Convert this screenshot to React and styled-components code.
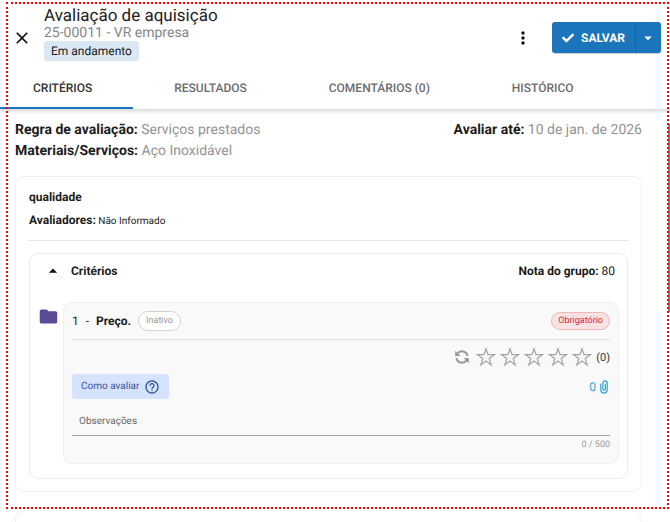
import React, { useState } from 'react';
import styled, { createGlobalStyle } from 'styled-components';
import { MdClose, MdMoreVert, MdFolder, MdHelpOutline, MdArrowDropUp, MdArrowDropDown } from 'react-icons/md';
import { FaCheck } from 'react-icons/fa';

const GlobalStyle = createGlobalStyle`
  *, *::before, *::after { box-sizing: border-box; }
  html, body { margin: 0; height: 100%; overflow: hidden; background: #fff; }
  body { font-family: Roboto, "Liberation Sans", sans-serif; color: #212121; text-rendering: geometricPrecision; }
  #root { height: 100%; }
  button, input { font-family: inherit; text-rendering: inherit; }
  h1, h2, h3, p { margin: 0; }
  svg { display: block; flex: none; }
`;

const Page = styled.div`
  position: relative;
  display: flex;
  flex-direction: column;
  height: 100%;
  overflow: hidden;
`;

const SelectionFrame = styled.div`
  position: absolute;
  inset: 2px 1px 13px 6px;
  border: 2px dotted #f00;
  pointer-events: none;
`;

const ScrollThumb = styled.div`
  position: absolute;
  top: 124px;
  right: 0;
  width: 2px;
  height: 188px;
  background: #858585;
`;

const Header = styled.header`
  flex: none;
  border-bottom: 1px solid #dedede;
  box-shadow: 0 2px 3px rgba(0, 0, 0, 0.12);
`;

const TitleBar = styled.div`
  display: flex;
  align-items: center;
  padding: 7px 9px 0 12px;
`;

const IconButton = styled.button`
  display: flex;
  align-items: center;
  justify-content: center;
  width: 20px;
  height: 20px;
  padding: 0;
  border: 0;
  background: transparent;
  color: ${({ $color }) => $color || '#111'};
  cursor: pointer;
`;

const Heading = styled.div`
  flex: 1;
  margin-left: 12px;
  padding-bottom: 7px;
`;

const Title = styled.h1`
  font-size: 17px;
  line-height: 18px;
  font-weight: 400;
`;

const Subtitle = styled.p`
  font-size: 14px;
  line-height: 16px;
  color: #868686;
`;

const StatusBadge = styled.span`
  display: block;
  width: fit-content;
  padding: 0 7px;
  border-radius: 3px;
  background: #dae8f4;
  font-size: 12px;
  line-height: 20px;
`;

const SplitButton = styled.div`
  display: flex;
  height: 31px;
  margin-left: 19px;
  border-radius: 3px;
  overflow: hidden;
  background: #1b75bb;
  box-shadow: 0 1px 1px rgba(0, 0, 0, 0.2);
`;

const SaveButton = styled.button`
  display: flex;
  align-items: center;
  gap: 7px;
  padding: 0 10px;
  border: 0;
  background: transparent;
  color: #fff;
  font-size: 12px;
  font-weight: 700;
  cursor: pointer;
`;

const SaveMenuButton = styled(SaveButton)`
  padding: 0 4px 0 3px;
  border-left: 1px solid #1565a8;
`;

const Tabs = styled.nav`
  display: flex;
`;

const Tab = styled.button`
  height: 41px;
  padding: 0 41px 0 ${({ $first }) => ($first ? '33px' : '41px')};
  border: 0;
  border-bottom: 2px solid ${({ $active }) => ($active ? '#1976c5' : 'transparent')};
  background: transparent;
  color: ${({ $active }) => ($active ? '#333' : '#6c6c6c')};
  font-size: 12px;
  font-weight: 500;
  white-space: nowrap;
  cursor: pointer;
`;

const Content = styled.main`
  flex: 1;
  min-height: 0;
  overflow: hidden;
  padding: 10px 28px 0 15px;
`;

const Summary = styled.section`
  display: flex;
  justify-content: space-between;
  font-size: 14px;
  line-height: 21px;
  color: #949494;
`;

const Strong = styled.strong`
  font-weight: 700;
  color: #1c1c1c;
`;

const Card = styled.section`
  margin-top: ${({ $gap }) => $gap}px;
  min-height: 40px;
  padding: 12px 13px;
  border: 1px solid #f1f1f1;
  border-radius: 9px;
`;

const CardTitle = styled.h2`
  font-size: 12px;
  line-height: 16px;
  font-weight: 700;
`;

const Reviewers = styled.p`
  margin-top: 7px;
  padding-bottom: 10px;
  border-bottom: 1px solid #e6e6e6;
  font-size: 10px;
  line-height: 16px;
`;

const ReviewersLabel = styled(Strong)`
  font-size: 12px;
`;

const Group = styled.section`
  margin-top: 12px;
  padding: 9px 8px 14px;
  border: 1px solid #ececec;
  border-radius: 9px;
`;

const GroupHeader = styled.div`
  display: flex;
  align-items: center;
  justify-content: space-between;
  height: 15px;
  padding: 0 4px 0 5px;
  font-size: 12px;
`;

const GroupTitle = styled.h3`
  display: flex;
  align-items: center;
  gap: 8px;
  font-size: 12px;
  font-weight: 700;
`;

const CriterionRow = styled.div`
  display: flex;
  gap: 4px;
  margin-top: 24px;
`;

const FolderSlot = styled.div`
  margin-top: 4px;
  color: #5b4b94;
`;

const Criterion = styled.article`
  flex: 1;
  min-width: 0;
  padding: 0 8px 11px;
  border: 1px solid #f0f0f0;
  border-radius: 9px;
  background: #f9f9f9;
`;

const CriterionHeader = styled.div`
  display: flex;
  align-items: center;
  gap: 7px;
  height: 37px;
  border-bottom: 1px solid #dfdfdf;
  font-size: 12px;
`;

const Pill = styled.span`
  padding: 0 ${({ $required }) => ($required ? '6px' : '7px')};
  border: 1px solid ${({ $required }) => ($required ? '#f0b6b8' : '#d3d3d3')};
  border-radius: 10px;
  margin-left: ${({ $required }) => ($required ? 'auto' : '0')};
  background: ${({ $required }) => ($required ? '#f8e3e4' : '#fff')};
  color: ${({ $required }) => ($required ? '#dc2a33' : '#969696')};
  font-size: 9px;
  line-height: ${({ $required }) => ($required ? '16px' : '18px')};
`;

const Rating = styled.div`
  display: flex;
  align-items: center;
  justify-content: flex-end;
  gap: 4px;
  height: 34px;
  font-size: 11px;
  color: #333;
`;

const Actions = styled.div`
  display: flex;
  align-items: center;
  justify-content: space-between;
`;

const HelpButton = styled.button`
  display: flex;
  align-items: center;
  gap: 5px;
  height: 25px;
  padding: 0 9px;
  border: 0;
  border-radius: 3px;
  background: #d5e3fc;
  color: #35569c;
  font-size: 10px;
  cursor: pointer;
`;

const AttachmentButton = styled.button`
  display: flex;
  align-items: center;
  gap: 4px;
  padding: 0 2px 0 0;
  border: 0;
  background: transparent;
  color: #2ba3cf;
  font-size: 12px;
  cursor: pointer;
`;

const NotesInput = styled.input`
  display: block;
  width: 100%;
  height: 28px;
  margin-top: 9px;
  padding: 0 7px;
  border: 0;
  border-bottom: 1px solid #a0a0a0;
  outline: 0;
  background: transparent;
  font-size: 10px;
  color: #333;
  &::placeholder { color: #666; opacity: 1; }
`;

const Counter = styled.p`
  margin-top: 2px;
  text-align: right;
  font-size: 9px;
  line-height: 14px;
  color: #999;
`;

const StarOutline = () => (
  <svg width="20" height="20" viewBox="0 0 20 20" fill="none" stroke="#a3a3a3" strokeWidth="1.2" aria-hidden="true">
    <path d="M10 1.7 L12 7.7 H18.3 L13.2 11.5 L15.2 18 L10 14.1 L4.8 18 L6.8 11.5 L1.7 7.7 H8 Z" />
  </svg>
);

const ResetIcon = () => (
  <svg width="16" height="16" viewBox="0 0 16 16" fill="none" stroke="currentColor" strokeWidth="2" aria-hidden="true">
    <path d="M3.4 4.8 A5.6 5.6 0 0 1 13.6 7" />
    <path d="M12.6 11.2 A5.6 5.6 0 0 1 2.4 9" />
    <path d="M1.2 1.8 V7 H6.4 Z M14.8 14.2 V9 H9.6 Z" fill="currentColor" stroke="none" />
  </svg>
);

const ClipIcon = () => (
  <svg width="8" height="14" viewBox="0 0 8 14" fill="none" stroke="currentColor" strokeWidth="1.2" strokeLinecap="round" aria-hidden="true">
    <path d="M5.3 4 V9.2 A1.2 1.2 0 0 1 2.9 9.2 V3 A2.1 2.1 0 0 1 7.2 3 V10 A3.2 3.2 0 0 1 0.8 10 V4" />
  </svg>
);

const tabs = ['CRITÉRIOS', 'RESULTADOS', 'COMENTÁRIOS (0)', 'HISTÓRICO'];

export default function App() {
  const [active, setActive] = useState(0);
  const [notes, setNotes] = useState('');

  return (
    <Page>
      <GlobalStyle />
      <Header>
        <TitleBar>
          <IconButton aria-label="Fechar"><MdClose size={20} /></IconButton>
          <Heading>
            <Title>Avaliação de aquisição</Title>
            <Subtitle>25-00011 - VR empresa</Subtitle>
            <StatusBadge>Em andamento</StatusBadge>
          </Heading>
          <IconButton aria-label="Mais opções"><MdMoreVert size={20} /></IconButton>
          <SplitButton>
            <SaveButton><FaCheck size={12} />SALVAR</SaveButton>
            <SaveMenuButton aria-label="Opções de salvar"><MdArrowDropDown size={18} /></SaveMenuButton>
          </SplitButton>
        </TitleBar>
        <Tabs>
          {tabs.map((label, i) => (
            <Tab key={label} $first={i === 0} $active={i === active} onClick={() => setActive(i)}>{label}</Tab>
          ))}
        </Tabs>
      </Header>

      <Content>
        <Summary>
          <div>
            <p><Strong>Regra de avaliação:</Strong> Serviços prestados</p>
            <p><Strong>Materiais/Serviços:</Strong> Aço Inoxidável</p>
          </div>
          <p><Strong>Avaliar até:</Strong> 10 de jan. de 2026</p>
        </Summary>

        <Card $gap={14}>
          <CardTitle>qualidade</CardTitle>
          <Reviewers><ReviewersLabel>Avaliadores:</ReviewersLabel> Não Informado</Reviewers>
          <Group>
            <GroupHeader>
              <GroupTitle>
                <IconButton aria-label="Recolher critérios"><MdArrowDropUp size={20} /></IconButton>
                Critérios
              </GroupTitle>
              <span><Strong>Nota do grupo:</Strong> 80</span>
            </GroupHeader>
            <CriterionRow>
              <FolderSlot><MdFolder size={21} /></FolderSlot>
              <Criterion>
                <CriterionHeader>
                  <span>1</span>
                  <span>-</span>
                  <Strong>Preço.</Strong>
                  <Pill>Inativo</Pill>
                  <Pill $required>Obrigatório</Pill>
                </CriterionHeader>
                <Rating>
                  <IconButton aria-label="Limpar nota" $color="#999"><ResetIcon /></IconButton>
                  {[1, 2, 3, 4, 5].map((n) => (
                    <IconButton key={n} aria-label={`Nota ${n}`}><StarOutline /></IconButton>
                  ))}
                  <span>(0)</span>
                </Rating>
                <Actions>
                  <HelpButton>Como avaliar <MdHelpOutline size={16} /></HelpButton>
                  <AttachmentButton aria-label="Anexos: 0">0<ClipIcon /></AttachmentButton>
                </Actions>
                <NotesInput
                  aria-label="Observações"
                  placeholder="Observações"
                  maxLength={500}
                  value={notes}
                  onChange={(e) => setNotes(e.target.value)}
                />
                <Counter>{notes.length} / 500</Counter>
              </Criterion>
            </CriterionRow>
          </Group>
        </Card>
        <Card $gap={18} />
      </Content>
      <ScrollThumb />
      <SelectionFrame />
    </Page>
  );
}
